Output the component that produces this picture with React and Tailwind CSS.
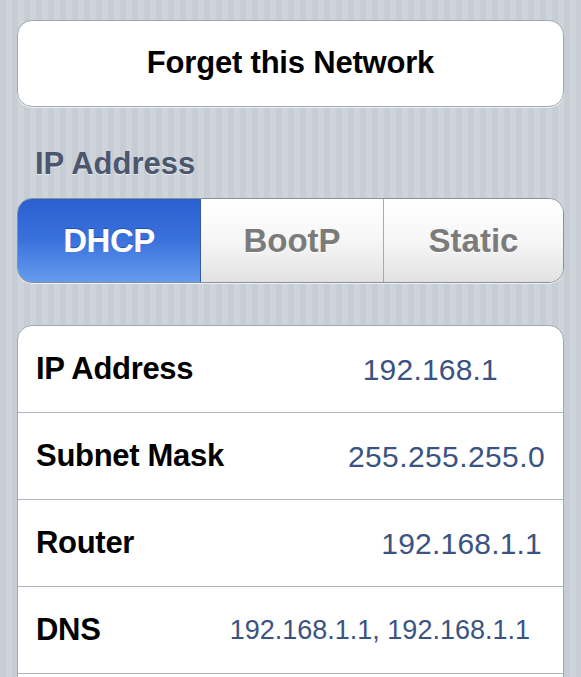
export default function App() {
  const rows = [
    { label: "IP Address", value: "192.168.1", pr: "pr-[65px]", vs: "text-[30px] tracking-[0.2px]" },
    { label: "Subnet Mask", value: "255.255.255.0", pr: "pr-[18px]", vs: "text-[30px] tracking-[0.4px]" },
    { label: "Router", value: "192.168.1.1", pr: "pr-[21px]", vs: "text-[30px] tracking-[0.2px]" },
    { label: "DNS", value: "192.168.1.1, 192.168.1.1", pr: "pr-[33px]", vs: "text-[27px] tracking-[0px]" },
    { label: "", value: "", pr: "pr-[20px]", vs: "" },
  ];
  return (
    <div
      className="w-[581px] h-[677px] overflow-hidden bg-[repeating-linear-gradient(90deg,#c6cdd5_0px,#c6cdd5_6px,#ced4da_6px,#ced4da_12px)] px-[17px] pt-[20px]"
      style={{ fontFamily: '"Liberation Sans", Arial, sans-serif' }}
    >
      <div className="h-[87px] rounded-[15px] bg-white border border-[#a2a7ad] shadow-[0_1px_0_#eef1f4] flex items-center justify-center">
        <span className="text-[31px] font-bold text-black tracking-[-0.2px]">Forget this Network</span>
      </div>

      <div className="pt-[34px] pl-[18px] h-[91px]">
        <span className="text-[31px] font-bold text-[#4c566c] [text-shadow:0_1px_0_#e6eaee]">IP Address</span>
      </div>

      <div className="h-[85px] flex rounded-[15px] border border-[#8b9095] overflow-hidden shadow-[0_1px_0_#eef1f4]">
        <div className="w-[183px] flex items-center justify-center bg-[linear-gradient(to_bottom,#2a5fd0_0%,#3a72dc_50%,#669cee_100%)] border-r border-[#3458a8]">
          <span className="text-[33px] font-bold text-white tracking-[-0.5px] [text-shadow:0_-1px_0_#2350a8]">DHCP</span>
        </div>
        <div className="w-[183px] flex items-center justify-center bg-[linear-gradient(to_bottom,#ffffff_0%,#f6f6f6_50%,#e2e2e2_100%)] border-r border-[#a8abae]">
          <span className="text-[33px] font-bold text-[#7b7b7b] tracking-[0px] [text-shadow:0_1px_0_#ffffff]">BootP</span>
        </div>
        <div className="flex-1 flex items-center justify-center bg-[linear-gradient(to_bottom,#ffffff_0%,#f6f6f6_50%,#e2e2e2_100%)]">
          <span className="text-[33px] font-bold text-[#7b7b7b] tracking-[0px] [text-shadow:0_1px_0_#ffffff]">Static</span>
        </div>
      </div>

      <div className="mt-[42px] rounded-t-[15px] bg-white border border-[#a2a7ad]">
        {rows.map((r, i) => (
          <div
            key={i}
            className={`h-[87px] flex items-center justify-between pl-[18px] ${r.pr} ${i < rows.length - 1 ? "border-b border-[#b3b5b8]" : ""}`}
          >
            <span className="text-[31px] font-bold text-black tracking-[-0.3px]">{r.label}</span>
            <span className={`${r.vs} text-[#3a5382]`}>{r.value}</span>
          </div>
        ))}
      </div>
    </div>
  );
}
